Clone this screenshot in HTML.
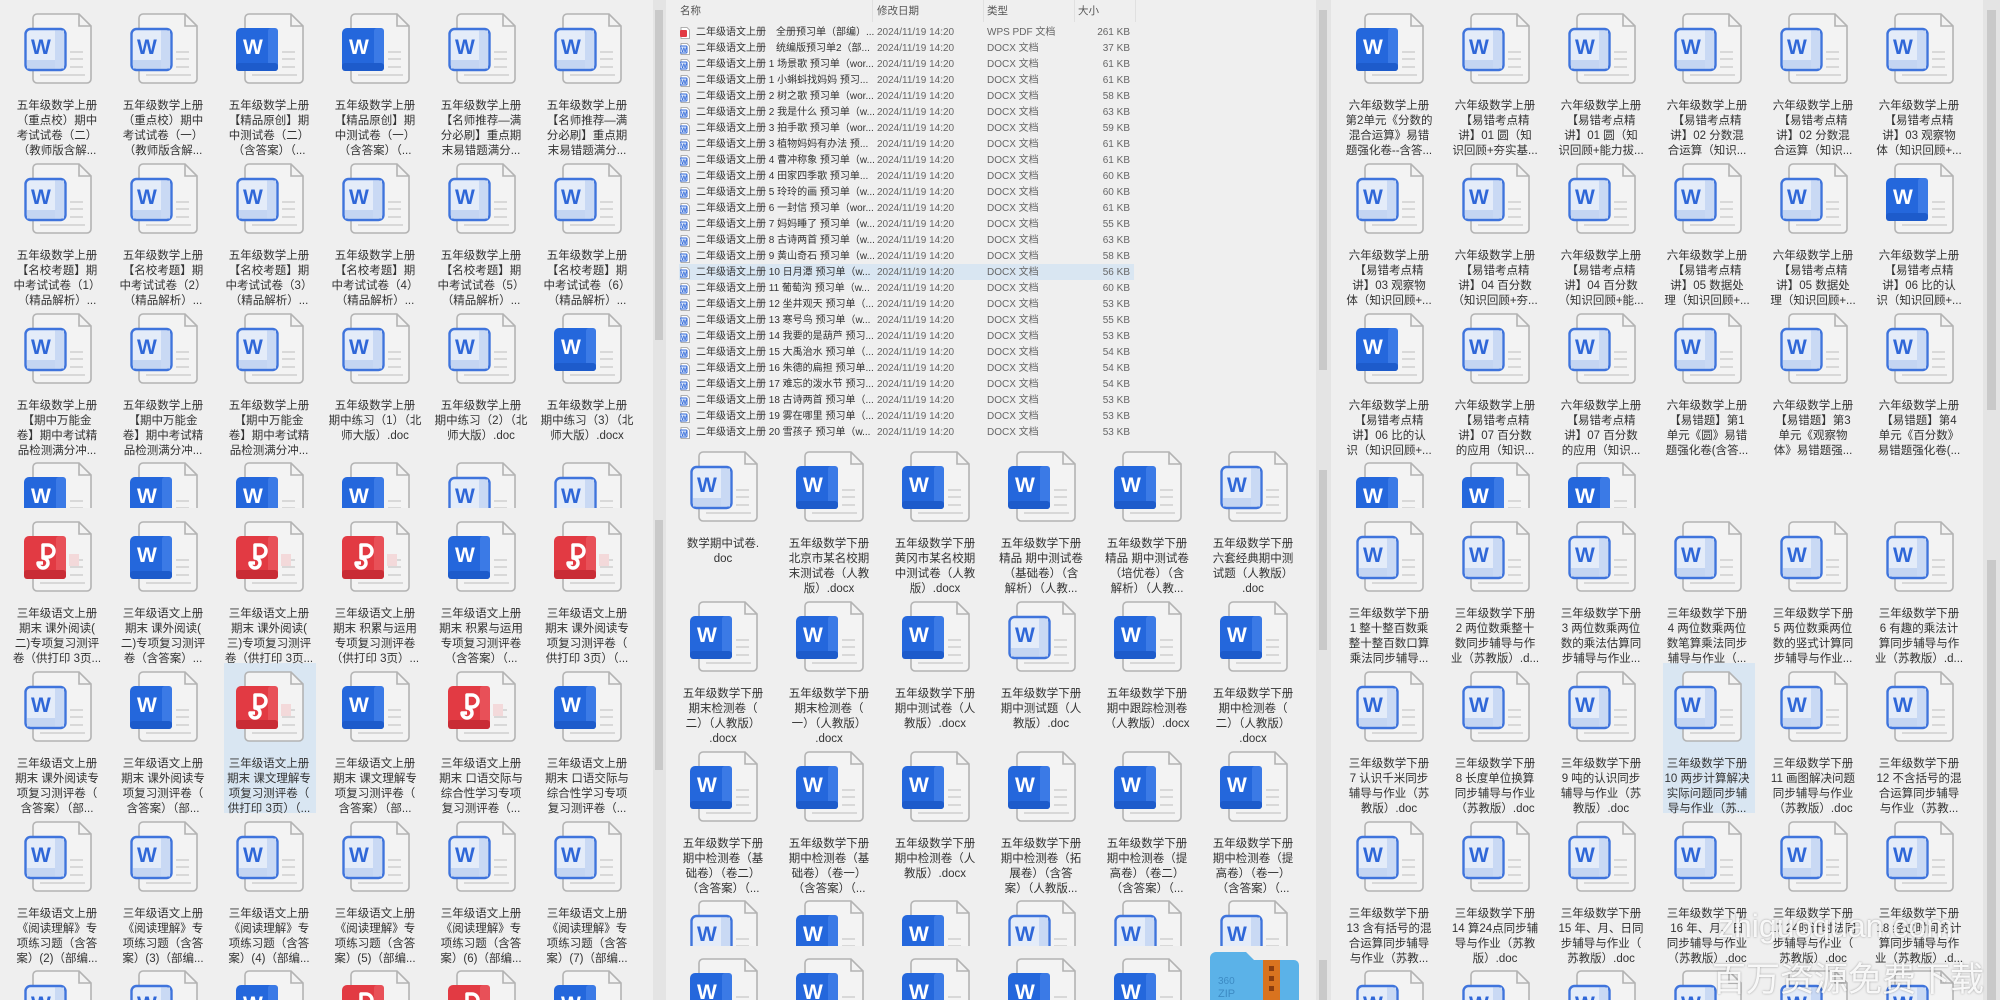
<!DOCTYPE html>
<html style="width:2000px;height:1000px;overflow:hidden"><head><meta charset="utf-8">
<style>
*{margin:0;padding:0;box-sizing:border-box}
html,body{width:2000px;height:1000px;overflow:hidden}
body{background:#efefef;font-family:"Liberation Sans","Noto Sans CJK SC",sans-serif;position:relative}
.pn{position:absolute;top:0;height:1000px;background:#efefef;overflow:hidden}
.sb{position:absolute;top:0;height:1000px;background:#e4e4e4}
.th{position:absolute;background:#c9c9c9}
.i{position:absolute;width:100px;height:150px}
.i svg{position:absolute;left:17px;top:0;width:70px;height:75px}
.i .l{position:absolute;left:0;top:86px;width:100px;text-align:center;font-size:11.5px;line-height:15px;color:#333;white-space:nowrap}
.c{height:46px;overflow:hidden}
.b{height:30px;overflow:hidden}
.sel{position:absolute;background:#d9e6f2}
.row{position:absolute;left:680px;width:453px;height:16px;font-size:10px;line-height:16px;color:#333;white-space:nowrap}
.row span{position:absolute;top:0}
.row .n{left:16px;width:178px;overflow:hidden}
.row .d{left:197px;color:#666}
.row .t{left:307px;color:#666}
.row .s{right:3px;color:#666}
.row svg{position:absolute;left:0;top:2px;width:10px;height:12px}
.hd{position:absolute;top:3px;font-size:10.5px;color:#555}
.vl{position:absolute;top:0;width:1px;height:22px;background:#e0e0e0}
.wm{position:absolute;color:rgba(255,255,255,.9);text-shadow:0 0 2px rgba(0,0,0,.35);white-space:nowrap}
</style></head><body>
<svg width="0" height="0" style="position:absolute">
<defs>
<symbol id="pg" viewBox="0 0 70 75"><path d="M13,1 H55 L67,13 V66 a4,4 0 0 1 -4,4 H13 a4,4 0 0 1 -4,-4 V5 a4,4 0 0 1 4,-4 Z" fill="#f3f3f3" stroke="#b3b3b3" stroke-width="1.6"/><path d="M55,1 V13 H67" fill="none" stroke="#b3b3b3" stroke-width="1.6"/><g stroke="#d8d8d8" stroke-width="2"><line x1="46" y1="39" x2="59" y2="39"/><line x1="46" y1="46" x2="59" y2="46"/><line x1="46" y1="54" x2="59" y2="54"/><line x1="16" y1="62" x2="61" y2="62"/></g></symbol>
<symbol id="wa" viewBox="0 0 70 75"><use href="#pg"/><rect x="1.5" y="16" width="40" height="41" rx="5" fill="#e4ecf9" stroke="#3f74dc" stroke-width="2.4"/><rect x="3" y="47" width="37" height="8.5" fill="#c4d5f2"/><rect x="31" y="17.5" width="9" height="38" fill="#c9d9f4"/><text x="7" y="41" font-family="Liberation Sans,sans-serif" font-weight="bold" font-size="21" fill="#2f67d8">W</text></symbol>
<symbol id="wb" viewBox="0 0 70 75"><use href="#pg"/><rect x="0" y="15" width="42" height="43" rx="5" fill="#2467dc"/><rect x="32" y="15" width="10" height="43" rx="3" fill="#3b7ae6"/><rect x="0" y="50" width="42" height="8" rx="3" fill="#1d5bcb"/><text x="7" y="41" font-family="Liberation Sans,sans-serif" font-weight="bold" font-size="21" fill="#fff">W</text></symbol>
<symbol id="pp" viewBox="0 0 70 75"><use href="#pg"/><rect x="45" y="33" width="10" height="12" fill="#f3d9da"/><rect x="0" y="15" width="42" height="43" rx="5" fill="#e23a43"/><rect x="32" y="15" width="10" height="43" rx="3" fill="#e85058"/><rect x="0" y="49" width="42" height="9" rx="3" fill="#c92c35"/><path d="M19,24 h5 a6,6 0 0 1 0,12 h-5 Z M19,30 v7 a5,5 0 1 1 -5,5 h5" fill="none" stroke="#fff" stroke-width="3.5" stroke-linejoin="round"/></symbol>
<symbol id="sw" viewBox="0 0 10 12"><path d="M1,.5 H7 L9.5,3 V11.5 H1 Z" fill="#fff" stroke="#999" stroke-width=".8"/><rect x="0" y="3" width="7" height="7" rx="1" fill="#e4ecf9" stroke="#2f67d8" stroke-width="1"/><text x="1" y="9" font-size="6" font-weight="bold" fill="#2f67d8" font-family="Liberation Sans">W</text></symbol>
<symbol id="sp" viewBox="0 0 10 12"><path d="M1,.5 H7 L9.5,3 V11.5 H1 Z" fill="#fff" stroke="#999" stroke-width=".8"/><rect x="0" y="3" width="7" height="7" rx="1" fill="#e23a43"/></symbol>
</defs></svg>

<!-- LEFT PANEL -->
<div class="pn" style="left:0;width:653px">
<div class="sel" style="left:224px;top:663px;width:92px;height:150px"></div>
<div class="i" style="left:7px;top:13px"><svg><use href="#wa"/></svg><div class="l">五年级数学上册<br>（重点校）期中<br>考试试卷（二）<br>（教师版含解...</div></div>
<div class="i" style="left:113px;top:13px"><svg><use href="#wa"/></svg><div class="l">五年级数学上册<br>（重点校）期中<br>考试试卷（一）<br>（教师版含解...</div></div>
<div class="i" style="left:219px;top:13px"><svg><use href="#wb"/></svg><div class="l">五年级数学上册<br>【精品原创】期<br>中测试卷（二）<br>（含答案）（...</div></div>
<div class="i" style="left:325px;top:13px"><svg><use href="#wb"/></svg><div class="l">五年级数学上册<br>【精品原创】期<br>中测试卷（一）<br>（含答案）（...</div></div>
<div class="i" style="left:431px;top:13px"><svg><use href="#wa"/></svg><div class="l">五年级数学上册<br>【名师推荐—满<br>分必刷】重点期<br>末易错题满分...</div></div>
<div class="i" style="left:537px;top:13px"><svg><use href="#wa"/></svg><div class="l">五年级数学上册<br>【名师推荐—满<br>分必刷】重点期<br>末易错题满分...</div></div>
<div class="i" style="left:7px;top:163px"><svg><use href="#wa"/></svg><div class="l">五年级数学上册<br>【名校考题】期<br>中考试试卷（1）<br>（精品解析）...</div></div>
<div class="i" style="left:113px;top:163px"><svg><use href="#wa"/></svg><div class="l">五年级数学上册<br>【名校考题】期<br>中考试试卷（2）<br>（精品解析）...</div></div>
<div class="i" style="left:219px;top:163px"><svg><use href="#wa"/></svg><div class="l">五年级数学上册<br>【名校考题】期<br>中考试试卷（3）<br>（精品解析）...</div></div>
<div class="i" style="left:325px;top:163px"><svg><use href="#wa"/></svg><div class="l">五年级数学上册<br>【名校考题】期<br>中考试试卷（4）<br>（精品解析）...</div></div>
<div class="i" style="left:431px;top:163px"><svg><use href="#wa"/></svg><div class="l">五年级数学上册<br>【名校考题】期<br>中考试试卷（5）<br>（精品解析）...</div></div>
<div class="i" style="left:537px;top:163px"><svg><use href="#wa"/></svg><div class="l">五年级数学上册<br>【名校考题】期<br>中考试试卷（6）<br>（精品解析）...</div></div>
<div class="i" style="left:7px;top:313px"><svg><use href="#wa"/></svg><div class="l">五年级数学上册<br>【期中万能金<br>卷】期中考试精<br>品检测满分冲...</div></div>
<div class="i" style="left:113px;top:313px"><svg><use href="#wa"/></svg><div class="l">五年级数学上册<br>【期中万能金<br>卷】期中考试精<br>品检测满分冲...</div></div>
<div class="i" style="left:219px;top:313px"><svg><use href="#wa"/></svg><div class="l">五年级数学上册<br>【期中万能金<br>卷】期中考试精<br>品检测满分冲...</div></div>
<div class="i" style="left:325px;top:313px"><svg><use href="#wa"/></svg><div class="l">五年级数学上册<br>期中练习（1）（北<br>师大版）.doc</div></div>
<div class="i" style="left:431px;top:313px"><svg><use href="#wa"/></svg><div class="l">五年级数学上册<br>期中练习（2）（北<br>师大版）.doc</div></div>
<div class="i" style="left:537px;top:313px"><svg><use href="#wb"/></svg><div class="l">五年级数学上册<br>期中练习（3）（北<br>师大版）.docx</div></div>
<div class="i c" style="left:7px;top:462px"><svg><use href="#wb"/></svg></div>
<div class="i c" style="left:113px;top:462px"><svg><use href="#wb"/></svg></div>
<div class="i c" style="left:219px;top:462px"><svg><use href="#wb"/></svg></div>
<div class="i c" style="left:325px;top:462px"><svg><use href="#wb"/></svg></div>
<div class="i c" style="left:431px;top:462px"><svg><use href="#wa"/></svg></div>
<div class="i c" style="left:537px;top:462px"><svg><use href="#wa"/></svg></div>
<div class="i" style="left:7px;top:521px"><svg><use href="#pp"/></svg><div class="l">三年级语文上册<br>期末 课外阅读(<br>二)专项复习测评<br>卷（供打印 3页...</div></div>
<div class="i" style="left:113px;top:521px"><svg><use href="#wb"/></svg><div class="l">三年级语文上册<br>期末 课外阅读(<br>二)专项复习测评<br>卷（含答案）...</div></div>
<div class="i" style="left:219px;top:521px"><svg><use href="#pp"/></svg><div class="l">三年级语文上册<br>期末 课外阅读(<br>三)专项复习测评<br>卷（供打印 3页...</div></div>
<div class="i" style="left:325px;top:521px"><svg><use href="#pp"/></svg><div class="l">三年级语文上册<br>期末 积累与运用<br>专项复习测评卷<br>（供打印 3页）...</div></div>
<div class="i" style="left:431px;top:521px"><svg><use href="#wb"/></svg><div class="l">三年级语文上册<br>期末 积累与运用<br>专项复习测评卷<br>（含答案）（...</div></div>
<div class="i" style="left:537px;top:521px"><svg><use href="#pp"/></svg><div class="l">三年级语文上册<br>期末 课外阅读专<br>项复习测评卷（<br>供打印 3页）（...</div></div>
<div class="i" style="left:7px;top:671px"><svg><use href="#wa"/></svg><div class="l">三年级语文上册<br>期末 课外阅读专<br>项复习测评卷（<br>含答案）（部...</div></div>
<div class="i" style="left:113px;top:671px"><svg><use href="#wb"/></svg><div class="l">三年级语文上册<br>期末 课外阅读专<br>项复习测评卷（<br>含答案）（部...</div></div>
<div class="i" style="left:219px;top:671px"><svg><use href="#pp"/></svg><div class="l">三年级语文上册<br>期末 课文理解专<br>项复习测评卷（<br>供打印 3页）（...</div></div>
<div class="i" style="left:325px;top:671px"><svg><use href="#wb"/></svg><div class="l">三年级语文上册<br>期末 课文理解专<br>项复习测评卷（<br>含答案）（部...</div></div>
<div class="i" style="left:431px;top:671px"><svg><use href="#pp"/></svg><div class="l">三年级语文上册<br>期末 口语交际与<br>综合性学习专项<br>复习测评卷（...</div></div>
<div class="i" style="left:537px;top:671px"><svg><use href="#wb"/></svg><div class="l">三年级语文上册<br>期末 口语交际与<br>综合性学习专项<br>复习测评卷（...</div></div>
<div class="i" style="left:7px;top:821px"><svg><use href="#wa"/></svg><div class="l">三年级语文上册<br>《阅读理解》专<br>项练习题（含答<br>案）(2)（部编...</div></div>
<div class="i" style="left:113px;top:821px"><svg><use href="#wa"/></svg><div class="l">三年级语文上册<br>《阅读理解》专<br>项练习题（含答<br>案）(3)（部编...</div></div>
<div class="i" style="left:219px;top:821px"><svg><use href="#wa"/></svg><div class="l">三年级语文上册<br>《阅读理解》专<br>项练习题（含答<br>案）(4)（部编...</div></div>
<div class="i" style="left:325px;top:821px"><svg><use href="#wa"/></svg><div class="l">三年级语文上册<br>《阅读理解》专<br>项练习题（含答<br>案）(5)（部编...</div></div>
<div class="i" style="left:431px;top:821px"><svg><use href="#wa"/></svg><div class="l">三年级语文上册<br>《阅读理解》专<br>项练习题（含答<br>案）(6)（部编...</div></div>
<div class="i" style="left:537px;top:821px"><svg><use href="#wa"/></svg><div class="l">三年级语文上册<br>《阅读理解》专<br>项练习题（含答<br>案）(7)（部编...</div></div>
<div class="i b" style="left:7px;top:970px"><svg><use href="#wa"/></svg></div>
<div class="i b" style="left:113px;top:970px"><svg><use href="#wa"/></svg></div>
<div class="i b" style="left:219px;top:970px"><svg><use href="#wb"/></svg></div>
<div class="i b" style="left:325px;top:970px"><svg><use href="#pp"/></svg></div>
<div class="i b" style="left:431px;top:970px"><svg><use href="#pp"/></svg></div>
<div class="i b" style="left:537px;top:970px"><svg><use href="#wb"/></svg></div>
</div>
<div class="sb" style="left:653px;width:13px"><div class="th" style="left:2px;top:10px;width:8px;height:330px"></div><div class="th" style="left:2px;top:520px;width:8px;height:250px"></div></div>

<!-- MIDDLE PANEL -->
<div class="pn" style="left:666px;width:650px"></div>
<div class="hd" style="left:680px">名称</div>
<div class="hd" style="left:877px">修改日期</div>
<div class="hd" style="left:987px">类型</div>
<div class="hd" style="left:1078px">大小</div>
<div class="vl" style="left:872px"></div><div class="vl" style="left:983px"></div><div class="vl" style="left:1074px"></div><div class="vl" style="left:1135px"></div>
<div class="sel" style="left:679px;top:264px;width:455px;height:16px"></div>
<div class="row" style="top:25px"><svg><use href="#sp"/></svg><span class="n">二年级语文上册　全册预习单（部编）...</span><span class="d">2024/11/19 14:20</span><span class="t">WPS PDF 文档</span><span class="s">261 KB</span></div>
<div class="row" style="top:41px"><svg><use href="#sw"/></svg><span class="n">二年级语文上册　统编版预习单2（部...</span><span class="d">2024/11/19 14:20</span><span class="t">DOCX 文档</span><span class="s">37 KB</span></div>
<div class="row" style="top:57px"><svg><use href="#sw"/></svg><span class="n">二年级语文上册 1 场景歌 预习单（wor...</span><span class="d">2024/11/19 14:20</span><span class="t">DOCX 文档</span><span class="s">61 KB</span></div>
<div class="row" style="top:73px"><svg><use href="#sw"/></svg><span class="n">二年级语文上册 1 小蝌蚪找妈妈 预习...</span><span class="d">2024/11/19 14:20</span><span class="t">DOCX 文档</span><span class="s">61 KB</span></div>
<div class="row" style="top:89px"><svg><use href="#sw"/></svg><span class="n">二年级语文上册 2 树之歌 预习单（wor...</span><span class="d">2024/11/19 14:20</span><span class="t">DOCX 文档</span><span class="s">58 KB</span></div>
<div class="row" style="top:105px"><svg><use href="#sw"/></svg><span class="n">二年级语文上册 2 我是什么 预习单（w...</span><span class="d">2024/11/19 14:20</span><span class="t">DOCX 文档</span><span class="s">63 KB</span></div>
<div class="row" style="top:121px"><svg><use href="#sw"/></svg><span class="n">二年级语文上册 3 拍手歌 预习单（wor...</span><span class="d">2024/11/19 14:20</span><span class="t">DOCX 文档</span><span class="s">59 KB</span></div>
<div class="row" style="top:137px"><svg><use href="#sw"/></svg><span class="n">二年级语文上册 3 植物妈妈有办法 预...</span><span class="d">2024/11/19 14:20</span><span class="t">DOCX 文档</span><span class="s">61 KB</span></div>
<div class="row" style="top:153px"><svg><use href="#sw"/></svg><span class="n">二年级语文上册 4 曹冲称象 预习单（w...</span><span class="d">2024/11/19 14:20</span><span class="t">DOCX 文档</span><span class="s">61 KB</span></div>
<div class="row" style="top:169px"><svg><use href="#sw"/></svg><span class="n">二年级语文上册 4 田家四季歌 预习单...</span><span class="d">2024/11/19 14:20</span><span class="t">DOCX 文档</span><span class="s">60 KB</span></div>
<div class="row" style="top:185px"><svg><use href="#sw"/></svg><span class="n">二年级语文上册 5 玲玲的画 预习单（w...</span><span class="d">2024/11/19 14:20</span><span class="t">DOCX 文档</span><span class="s">60 KB</span></div>
<div class="row" style="top:201px"><svg><use href="#sw"/></svg><span class="n">二年级语文上册 6 一封信 预习单（wor...</span><span class="d">2024/11/19 14:20</span><span class="t">DOCX 文档</span><span class="s">61 KB</span></div>
<div class="row" style="top:217px"><svg><use href="#sw"/></svg><span class="n">二年级语文上册 7 妈妈睡了 预习单（w...</span><span class="d">2024/11/19 14:20</span><span class="t">DOCX 文档</span><span class="s">55 KB</span></div>
<div class="row" style="top:233px"><svg><use href="#sw"/></svg><span class="n">二年级语文上册 8 古诗两首 预习单（w...</span><span class="d">2024/11/19 14:20</span><span class="t">DOCX 文档</span><span class="s">63 KB</span></div>
<div class="row" style="top:249px"><svg><use href="#sw"/></svg><span class="n">二年级语文上册 9 黄山奇石 预习单（w...</span><span class="d">2024/11/19 14:20</span><span class="t">DOCX 文档</span><span class="s">58 KB</span></div>
<div class="row" style="top:265px"><svg><use href="#sw"/></svg><span class="n">二年级语文上册 10 日月潭 预习单（w...</span><span class="d">2024/11/19 14:20</span><span class="t">DOCX 文档</span><span class="s">56 KB</span></div>
<div class="row" style="top:281px"><svg><use href="#sw"/></svg><span class="n">二年级语文上册 11 葡萄沟 预习单（w...</span><span class="d">2024/11/19 14:20</span><span class="t">DOCX 文档</span><span class="s">60 KB</span></div>
<div class="row" style="top:297px"><svg><use href="#sw"/></svg><span class="n">二年级语文上册 12 坐井观天 预习单（...</span><span class="d">2024/11/19 14:20</span><span class="t">DOCX 文档</span><span class="s">53 KB</span></div>
<div class="row" style="top:313px"><svg><use href="#sw"/></svg><span class="n">二年级语文上册 13 寒号鸟 预习单（w...</span><span class="d">2024/11/19 14:20</span><span class="t">DOCX 文档</span><span class="s">55 KB</span></div>
<div class="row" style="top:329px"><svg><use href="#sw"/></svg><span class="n">二年级语文上册 14 我要的是葫芦 预习...</span><span class="d">2024/11/19 14:20</span><span class="t">DOCX 文档</span><span class="s">53 KB</span></div>
<div class="row" style="top:345px"><svg><use href="#sw"/></svg><span class="n">二年级语文上册 15 大禹治水 预习单（...</span><span class="d">2024/11/19 14:20</span><span class="t">DOCX 文档</span><span class="s">54 KB</span></div>
<div class="row" style="top:361px"><svg><use href="#sw"/></svg><span class="n">二年级语文上册 16 朱德的扁担 预习单...</span><span class="d">2024/11/19 14:20</span><span class="t">DOCX 文档</span><span class="s">54 KB</span></div>
<div class="row" style="top:377px"><svg><use href="#sw"/></svg><span class="n">二年级语文上册 17 难忘的泼水节 预习...</span><span class="d">2024/11/19 14:20</span><span class="t">DOCX 文档</span><span class="s">54 KB</span></div>
<div class="row" style="top:393px"><svg><use href="#sw"/></svg><span class="n">二年级语文上册 18 古诗两首 预习单（...</span><span class="d">2024/11/19 14:20</span><span class="t">DOCX 文档</span><span class="s">53 KB</span></div>
<div class="row" style="top:409px"><svg><use href="#sw"/></svg><span class="n">二年级语文上册 19 雾在哪里 预习单（...</span><span class="d">2024/11/19 14:20</span><span class="t">DOCX 文档</span><span class="s">53 KB</span></div>
<div class="row" style="top:425px"><svg><use href="#sw"/></svg><span class="n">二年级语文上册 20 雪孩子 预习单（w...</span><span class="d">2024/11/19 14:20</span><span class="t">DOCX 文档</span><span class="s">53 KB</span></div>
<div class="i" style="left:673px;top:451px"><svg><use href="#wa"/></svg><div class="l">数学期中试卷.<br>doc</div></div>
<div class="i" style="left:779px;top:451px"><svg><use href="#wb"/></svg><div class="l">五年级数学下册<br>北京市某名校期<br>末测试卷（人教<br>版）.docx</div></div>
<div class="i" style="left:885px;top:451px"><svg><use href="#wb"/></svg><div class="l">五年级数学下册<br>黄冈市某名校期<br>中测试卷（人教<br>版）.docx</div></div>
<div class="i" style="left:991px;top:451px"><svg><use href="#wb"/></svg><div class="l">五年级数学下册<br>精品 期中测试卷<br>（基础卷）（含<br>解析）（人教...</div></div>
<div class="i" style="left:1097px;top:451px"><svg><use href="#wb"/></svg><div class="l">五年级数学下册<br>精品 期中测试卷<br>（培优卷）（含<br>解析）（人教...</div></div>
<div class="i" style="left:1203px;top:451px"><svg><use href="#wa"/></svg><div class="l">五年级数学下册<br>六套经典期中测<br>试题（人教版）<br>.doc</div></div>
<div class="i" style="left:673px;top:601px"><svg><use href="#wb"/></svg><div class="l">五年级数学下册<br>期末检测卷（<br>二）（人教版）<br>.docx</div></div>
<div class="i" style="left:779px;top:601px"><svg><use href="#wb"/></svg><div class="l">五年级数学下册<br>期末检测卷（<br>一）（人教版）<br>.docx</div></div>
<div class="i" style="left:885px;top:601px"><svg><use href="#wb"/></svg><div class="l">五年级数学下册<br>期中测试卷（人<br>教版）.docx</div></div>
<div class="i" style="left:991px;top:601px"><svg><use href="#wa"/></svg><div class="l">五年级数学下册<br>期中测试题（人<br>教版）.doc</div></div>
<div class="i" style="left:1097px;top:601px"><svg><use href="#wb"/></svg><div class="l">五年级数学下册<br>期中跟踪检测卷<br>（人教版）.docx</div></div>
<div class="i" style="left:1203px;top:601px"><svg><use href="#wb"/></svg><div class="l">五年级数学下册<br>期中检测卷（<br>二）（人教版）<br>.docx</div></div>
<div class="i" style="left:673px;top:751px"><svg><use href="#wb"/></svg><div class="l">五年级数学下册<br>期中检测卷（基<br>础卷）（卷二）<br>（含答案）（...</div></div>
<div class="i" style="left:779px;top:751px"><svg><use href="#wb"/></svg><div class="l">五年级数学下册<br>期中检测卷（基<br>础卷）（卷一）<br>（含答案）（...</div></div>
<div class="i" style="left:885px;top:751px"><svg><use href="#wb"/></svg><div class="l">五年级数学下册<br>期中检测卷（人<br>教版）.docx</div></div>
<div class="i" style="left:991px;top:751px"><svg><use href="#wb"/></svg><div class="l">五年级数学下册<br>期中检测卷（拓<br>展卷）（含答<br>案）（人教版...</div></div>
<div class="i" style="left:1097px;top:751px"><svg><use href="#wb"/></svg><div class="l">五年级数学下册<br>期中检测卷（提<br>高卷）（卷二）<br>（含答案）（...</div></div>
<div class="i" style="left:1203px;top:751px"><svg><use href="#wb"/></svg><div class="l">五年级数学下册<br>期中检测卷（提<br>高卷）（卷一）<br>（含答案）（...</div></div>
<div class="i c" style="left:673px;top:900px"><svg><use href="#wa"/></svg></div>
<div class="i c" style="left:779px;top:900px"><svg><use href="#wb"/></svg></div>
<div class="i c" style="left:885px;top:900px"><svg><use href="#wb"/></svg></div>
<div class="i c" style="left:991px;top:900px"><svg><use href="#wa"/></svg></div>
<div class="i c" style="left:1097px;top:900px"><svg><use href="#wa"/></svg></div>
<div class="i c" style="left:1203px;top:900px"><svg><use href="#wa"/></svg></div>
<div class="i c" style="left:673px;top:958px"><svg><use href="#wb"/></svg></div>
<div class="i c" style="left:779px;top:958px"><svg><use href="#wb"/></svg></div>
<div class="i c" style="left:885px;top:958px"><svg><use href="#wb"/></svg></div>
<div class="i c" style="left:991px;top:958px"><svg><use href="#wb"/></svg></div>
<div class="i c" style="left:1097px;top:958px"><svg><use href="#wb"/></svg></div>
<svg style="position:absolute;left:1210px;top:952px;width:90px;height:48px" viewBox="0 0 90 48"><path d="M6,0 H36 L44,8 H84 a5,5 0 0 1 5,5 V48 H0 V6 a6,6 0 0 1 6,-6 Z" fill="#5bb2e8"/><rect x="53" y="8" width="17" height="40" fill="#d9731f"/><g fill="#8a3d10"><rect x="59" y="14" width="5" height="5"/><rect x="59" y="24" width="5" height="5"/><rect x="59" y="34" width="5" height="5"/></g><text x="8" y="32" font-size="10" fill="#3d8bc4" font-family="Liberation Sans">360</text><text x="8" y="45" font-size="11" fill="#3d8bc4" font-family="Liberation Sans">ZIP</text></svg>
<div class="sb" style="left:1316px;width:15px"><div class="th" style="left:3px;top:10px;width:8px;height:360px"></div><div class="th" style="left:3px;top:470px;width:8px;height:180px"></div><div class="th" style="left:3px;top:960px;width:8px;height:40px"></div></div>

<!-- RIGHT PANEL -->
<div class="pn" style="left:1331px;width:652px">
<div class="sel" style="left:332px;top:663px;width:92px;height:150px"></div>
</div>
<div class="i" style="left:1339px;top:13px"><svg><use href="#wb"/></svg><div class="l">六年级数学上册<br>第2单元《分数的<br>混合运算》易错<br>题强化卷--含答...</div></div>
<div class="i" style="left:1445px;top:13px"><svg><use href="#wa"/></svg><div class="l">六年级数学上册<br>【易错考点精<br>讲】01 圆（知<br>识回顾+夯实基...</div></div>
<div class="i" style="left:1551px;top:13px"><svg><use href="#wa"/></svg><div class="l">六年级数学上册<br>【易错考点精<br>讲】01 圆（知<br>识回顾+能力拔...</div></div>
<div class="i" style="left:1657px;top:13px"><svg><use href="#wa"/></svg><div class="l">六年级数学上册<br>【易错考点精<br>讲】02 分数混<br>合运算（知识...</div></div>
<div class="i" style="left:1763px;top:13px"><svg><use href="#wa"/></svg><div class="l">六年级数学上册<br>【易错考点精<br>讲】02 分数混<br>合运算（知识...</div></div>
<div class="i" style="left:1869px;top:13px"><svg><use href="#wa"/></svg><div class="l">六年级数学上册<br>【易错考点精<br>讲】03 观察物<br>体（知识回顾+...</div></div>
<div class="i" style="left:1339px;top:163px"><svg><use href="#wa"/></svg><div class="l">六年级数学上册<br>【易错考点精<br>讲】03 观察物<br>体（知识回顾+...</div></div>
<div class="i" style="left:1445px;top:163px"><svg><use href="#wa"/></svg><div class="l">六年级数学上册<br>【易错考点精<br>讲】04 百分数<br>（知识回顾+夯...</div></div>
<div class="i" style="left:1551px;top:163px"><svg><use href="#wa"/></svg><div class="l">六年级数学上册<br>【易错考点精<br>讲】04 百分数<br>（知识回顾+能...</div></div>
<div class="i" style="left:1657px;top:163px"><svg><use href="#wa"/></svg><div class="l">六年级数学上册<br>【易错考点精<br>讲】05 数据处<br>理（知识回顾+...</div></div>
<div class="i" style="left:1763px;top:163px"><svg><use href="#wa"/></svg><div class="l">六年级数学上册<br>【易错考点精<br>讲】05 数据处<br>理（知识回顾+...</div></div>
<div class="i" style="left:1869px;top:163px"><svg><use href="#wb"/></svg><div class="l">六年级数学上册<br>【易错考点精<br>讲】06 比的认<br>识（知识回顾+...</div></div>
<div class="i" style="left:1339px;top:313px"><svg><use href="#wb"/></svg><div class="l">六年级数学上册<br>【易错考点精<br>讲】06 比的认<br>识（知识回顾+...</div></div>
<div class="i" style="left:1445px;top:313px"><svg><use href="#wa"/></svg><div class="l">六年级数学上册<br>【易错考点精<br>讲】07 百分数<br>的应用（知识...</div></div>
<div class="i" style="left:1551px;top:313px"><svg><use href="#wa"/></svg><div class="l">六年级数学上册<br>【易错考点精<br>讲】07 百分数<br>的应用（知识...</div></div>
<div class="i" style="left:1657px;top:313px"><svg><use href="#wa"/></svg><div class="l">六年级数学上册<br>【易错题】第1<br>单元《圆》易错<br>题强化卷(含答...</div></div>
<div class="i" style="left:1763px;top:313px"><svg><use href="#wa"/></svg><div class="l">六年级数学上册<br>【易错题】第3<br>单元《观察物<br>体》易错题强...</div></div>
<div class="i" style="left:1869px;top:313px"><svg><use href="#wa"/></svg><div class="l">六年级数学上册<br>【易错题】第4<br>单元《百分数》<br>易错题强化卷(...</div></div>
<div class="i c" style="left:1339px;top:462px"><svg><use href="#wb"/></svg></div>
<div class="i c" style="left:1445px;top:462px"><svg><use href="#wb"/></svg></div>
<div class="i c" style="left:1551px;top:462px"><svg><use href="#wb"/></svg></div>
<div class="i" style="left:1339px;top:521px"><svg><use href="#wa"/></svg><div class="l">三年级数学下册<br>1 整十整百数乘<br>整十整百数口算<br>乘法同步辅导...</div></div>
<div class="i" style="left:1445px;top:521px"><svg><use href="#wa"/></svg><div class="l">三年级数学下册<br>2 两位数乘整十<br>数同步辅导与作<br>业（苏教版）.d...</div></div>
<div class="i" style="left:1551px;top:521px"><svg><use href="#wa"/></svg><div class="l">三年级数学下册<br>3 两位数乘两位<br>数的乘法估算同<br>步辅导与作业...</div></div>
<div class="i" style="left:1657px;top:521px"><svg><use href="#wa"/></svg><div class="l">三年级数学下册<br>4 两位数乘两位<br>数笔算乘法同步<br>辅导与作业（...</div></div>
<div class="i" style="left:1763px;top:521px"><svg><use href="#wa"/></svg><div class="l">三年级数学下册<br>5 两位数乘两位<br>数的竖式计算同<br>步辅导与作业...</div></div>
<div class="i" style="left:1869px;top:521px"><svg><use href="#wa"/></svg><div class="l">三年级数学下册<br>6 有趣的乘法计<br>算同步辅导与作<br>业（苏教版）.d...</div></div>
<div class="i" style="left:1339px;top:671px"><svg><use href="#wa"/></svg><div class="l">三年级数学下册<br>7 认识千米同步<br>辅导与作业（苏<br>教版）.doc</div></div>
<div class="i" style="left:1445px;top:671px"><svg><use href="#wa"/></svg><div class="l">三年级数学下册<br>8 长度单位换算<br>同步辅导与作业<br>（苏教版）.doc</div></div>
<div class="i" style="left:1551px;top:671px"><svg><use href="#wa"/></svg><div class="l">三年级数学下册<br>9 吨的认识同步<br>辅导与作业（苏<br>教版）.doc</div></div>
<div class="i" style="left:1657px;top:671px"><svg><use href="#wa"/></svg><div class="l">三年级数学下册<br>10 两步计算解决<br>实际问题同步辅<br>导与作业（苏...</div></div>
<div class="i" style="left:1763px;top:671px"><svg><use href="#wa"/></svg><div class="l">三年级数学下册<br>11 画图解决问题<br>同步辅导与作业<br>（苏教版）.doc</div></div>
<div class="i" style="left:1869px;top:671px"><svg><use href="#wa"/></svg><div class="l">三年级数学下册<br>12 不含括号的混<br>合运算同步辅导<br>与作业（苏教...</div></div>
<div class="i" style="left:1339px;top:821px"><svg><use href="#wa"/></svg><div class="l">三年级数学下册<br>13 含有括号的混<br>合运算同步辅导<br>与作业（苏教...</div></div>
<div class="i" style="left:1445px;top:821px"><svg><use href="#wa"/></svg><div class="l">三年级数学下册<br>14 算24点同步辅<br>导与作业（苏教<br>版）.doc</div></div>
<div class="i" style="left:1551px;top:821px"><svg><use href="#wa"/></svg><div class="l">三年级数学下册<br>15 年、月、日同<br>步辅导与作业（<br>苏教版）.doc</div></div>
<div class="i" style="left:1657px;top:821px"><svg><use href="#wa"/></svg><div class="l">三年级数学下册<br>16 年、月、日<br>同步辅导与作业<br>（苏教版）.doc</div></div>
<div class="i" style="left:1763px;top:821px"><svg><use href="#wa"/></svg><div class="l">三年级数学下册<br>17 24时计时法同<br>步辅导与作业（<br>苏教版）.doc</div></div>
<div class="i" style="left:1869px;top:821px"><svg><use href="#wa"/></svg><div class="l">三年级数学下册<br>18 经过时间的计<br>算同步辅导与作<br>业（苏教版）.d...</div></div>
<div class="i b" style="left:1339px;top:970px"><svg><use href="#wa"/></svg></div>
<div class="i b" style="left:1445px;top:970px"><svg><use href="#wa"/></svg></div>
<div class="i b" style="left:1551px;top:970px"><svg><use href="#wa"/></svg></div>
<div class="i b" style="left:1657px;top:970px"><svg><use href="#wa"/></svg></div>
<div class="i b" style="left:1763px;top:970px"><svg><use href="#wa"/></svg></div>
<div class="i b" style="left:1869px;top:970px"><svg><use href="#wa"/></svg></div>
<div class="sb" style="left:1983px;width:17px"><div class="th" style="left:4px;top:10px;width:9px;height:400px"></div><div class="th" style="left:4px;top:560px;width:9px;height:440px"></div></div>

<div class="wm" style="left:1718px;top:908px;font-size:32px">zhiguoquan.com</div>
<div class="wm" style="left:1712px;top:952px;font-size:34px">百万资源免费下载</div>
</body></html>
